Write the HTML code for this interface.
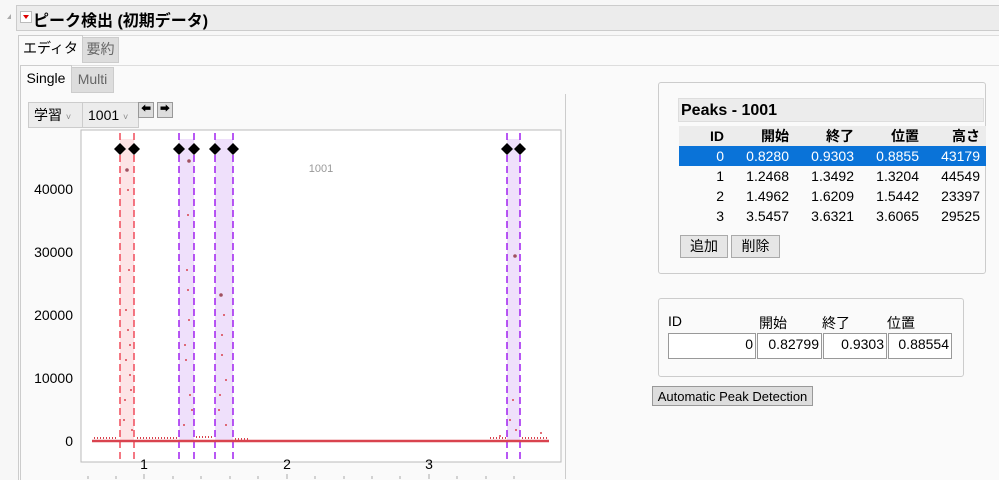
<!DOCTYPE html><html><head><meta charset="utf-8"><style>
body{margin:0;width:999px;height:479px;background:#f7f7f7;font-family:"Liberation Sans","Noto Sans CJK JP",sans-serif;position:relative;overflow:hidden}
.a{position:absolute}
.tbl td{font-size:14px;text-align:right;padding:0 6px 0 0;height:20px}
</style></head><body>
<div class="a" style="left:16px;top:5px;width:983px;height:24px;background:#ececec;border:1px solid #ccc;border-right:none"></div>
<div class="a" style="left:7px;top:14px;width:0;height:0;border-left:4px solid transparent;border-bottom:5px solid #aaa"></div>
<div class="a" style="left:20px;top:11px;width:10px;height:10px;background:#fff;border:1px solid #bbb"></div>
<div class="a" style="left:23px;top:15px;border-left:3px solid transparent;border-right:3px solid transparent;border-top:4px solid #d00"></div>
<div class="a" style="left:33px;top:7px;font-size:16px;font-weight:bold">ピーク検出 (初期データ)</div>
<div class="a" style="left:18px;top:35px;width:981px;height:444px;background:#fafafa;border-left:1px solid #ccc;border-top:1px solid #ddd"></div>
<div class="a" style="left:18px;top:35px;width:63px;height:27px;background:#fafafa;border:1px solid #ccc;border-bottom:none;font-size:14px;line-height:24px;text-align:center">エディタ</div>
<div class="a" style="left:82px;top:37px;width:35px;height:24px;background:#ddd;border:1px solid #ccc;font-size:14px;line-height:22px;text-align:center;color:#666">要約</div>
<div class="a" style="left:20px;top:65px;width:979px;height:414px;border-top:1px solid #ddd;border-left:1px solid #ccc"></div>
<div class="a" style="left:20px;top:65px;width:50px;height:25px;border:1px solid #ccc;border-bottom:none;background:#fafafa;font-size:14px;line-height:25px;text-align:center">Single</div>
<div class="a" style="left:71px;top:67px;width:41px;height:24px;background:#ddd;border:1px solid #ccc;font-size:14px;line-height:23px;text-align:center;color:#666">Multi</div>
<div class="a" style="left:18px;top:94px;width:546px;height:385px;border-left:1px solid #ccc;border-right:1px solid #ccc"></div>
<div class="a" style="left:28px;top:102px;width:49px;height:24px;background:#ececec;border:1px solid #ccc;font-size:14px;line-height:24px;padding-left:5px">学習 <span style="font-size:9px;color:#888">˅</span></div>
<div class="a" style="left:82px;top:102px;width:50px;height:24px;background:#ececec;border:1px solid #ccc;font-size:14px;line-height:24px;padding-left:5px">1001 <span style="font-size:9px;color:#888">˅</span></div>
<div class="a" style="left:138px;top:102px;width:14px;height:14px;background:#ddd;border:1px solid #999;font-size:10px;line-height:14px;text-align:center">⬅</div>
<div class="a" style="left:157px;top:102px;width:14px;height:14px;background:#ddd;border:1px solid #999;font-size:10px;line-height:14px;text-align:center">➡</div>
<svg class="a" style="left:0;top:0" width="999" height="479">
<rect x="81" y="130" width="480" height="332" fill="#fff" stroke="#bbb"/>
<g font-size="14" text-anchor="end" fill="#000">
<text x="73" y="194">40000</text><text x="73" y="257">30000</text><text x="73" y="320">20000</text><text x="73" y="383">10000</text><text x="73" y="446">0</text></g>
<g font-size="14" text-anchor="middle"><text x="144" y="469">1</text><text x="287" y="469">2</text><text x="429" y="469">3</text></g>
<g stroke="#aaa"><line x1="144" y1="474" x2="144" y2="479"/><line x1="287" y1="474" x2="287" y2="479"/><line x1="429" y1="474" x2="429" y2="479"/><line x1="88" y1="476" x2="88" y2="479"/><line x1="116" y1="476" x2="116" y2="479"/><line x1="173" y1="476" x2="173" y2="479"/><line x1="201" y1="476" x2="201" y2="479"/><line x1="230" y1="476" x2="230" y2="479"/><line x1="258" y1="476" x2="258" y2="479"/><line x1="315" y1="476" x2="315" y2="479"/><line x1="344" y1="476" x2="344" y2="479"/><line x1="372" y1="476" x2="372" y2="479"/><line x1="400" y1="476" x2="400" y2="479"/><line x1="457" y1="476" x2="457" y2="479"/><line x1="486" y1="476" x2="486" y2="479"/><line x1="514" y1="476" x2="514" y2="479"/></g>
<text x="321" y="172" font-size="11" fill="#999" text-anchor="middle">1001</text>
<rect x="120" y="139" width="14" height="302" fill="#fde4e6"/>
<rect x="179" y="139" width="15" height="302" fill="#efe0fb"/>
<rect x="215" y="139" width="18" height="302" fill="#efe0fb"/>
<rect x="507" y="139" width="13" height="302" fill="#efe0fb"/>
<g stroke-dasharray="7,4" stroke-width="1.5">
<line x1="120" y1="133" x2="120" y2="460" stroke="#f04b5a"/><line x1="134" y1="133" x2="134" y2="460" stroke="#f04b5a"/>
<line x1="179" y1="133" x2="179" y2="460" stroke="#a020f0"/><line x1="194" y1="133" x2="194" y2="460" stroke="#a020f0"/>
<line x1="215" y1="133" x2="215" y2="460" stroke="#a020f0"/><line x1="233" y1="133" x2="233" y2="460" stroke="#a020f0"/>
<line x1="507" y1="133" x2="507" y2="460" stroke="#a020f0"/><line x1="520" y1="133" x2="520" y2="460" stroke="#a020f0"/></g>
<line x1="92" y1="441" x2="549" y2="441" stroke="#d9434f" stroke-width="2.5"/>
<g stroke="#d9434f" stroke-width="2" stroke-dasharray="1,2">
<line x1="94" y1="438" x2="118" y2="438"/><line x1="137" y1="438" x2="178" y2="438"/><line x1="196" y1="437" x2="214" y2="437"/><line x1="235" y1="439" x2="250" y2="439"/><line x1="490" y1="438" x2="506" y2="438"/><line x1="522" y1="438" x2="549" y2="438"/></g>
<g fill="#d9434f">
<circle cx="127" cy="170" r="1.8" fill="#a05060"/><circle cx="128" cy="190" r="1"/><circle cx="129" cy="270" r="1"/><circle cx="126" cy="310" r="1"/><circle cx="128" cy="330" r="1"/><circle cx="130" cy="345" r="1"/><circle cx="126" cy="360" r="1"/><circle cx="131" cy="390" r="1"/><circle cx="124" cy="420" r="1"/><circle cx="132" cy="430" r="1"/><circle cx="125" cy="400" r="1"/><circle cx="130" cy="375" r="1"/>
<circle cx="189" cy="161" r="1.8" fill="#a05060"/><circle cx="188" cy="215" r="1"/><circle cx="187" cy="270" r="1"/><circle cx="189" cy="320" r="1"/><circle cx="186" cy="360" r="1"/><circle cx="190" cy="395" r="1"/><circle cx="192" cy="410" r="1"/><circle cx="184" cy="425" r="1"/><circle cx="188" cy="290" r="1"/><circle cx="185" cy="345" r="1"/>
<circle cx="221" cy="295" r="1.8" fill="#a05060"/><circle cx="224" cy="315" r="1"/><circle cx="222" cy="355" r="1"/><circle cx="226" cy="380" r="1"/><circle cx="219" cy="410" r="1"/><circle cx="226" cy="425" r="1"/><circle cx="222" cy="335" r="1"/><circle cx="220" cy="395" r="1"/>
<circle cx="515" cy="256" r="1.8" fill="#a05060"/><circle cx="513" cy="400" r="1"/><circle cx="510" cy="420" r="1"/><circle cx="516" cy="430" r="1"/><circle cx="541" cy="433" r="1"/><circle cx="500" cy="436" r="1"/></g>
<g fill="#000">
<path d="M120 143l6 6-6 6-6-6z"/><path d="M134 143l6 6-6 6-6-6z"/><path d="M179 143l6 6-6 6-6-6z"/><path d="M194 143l6 6-6 6-6-6z"/><path d="M215 143l6 6-6 6-6-6z"/><path d="M233 143l6 6-6 6-6-6z"/><path d="M507 143l6 6-6 6-6-6z"/><path d="M520 143l6 6-6 6-6-6z"/></g>
</svg>
<div class="a" style="left:658px;top:82px;width:326px;height:190px;border:1px solid #ccc;border-radius:3px;background:#fafafa"></div>
<div class="a" style="left:678px;top:98px;width:306px;height:24px;background:#ececec;border:1px solid #ddd;font-size:16px;font-weight:bold;line-height:24px;padding-left:2px;box-sizing:border-box">Peaks - 1001</div>
<table class="a tbl" style="left:679px;top:126px;border-collapse:collapse;width:307px">
<tr style="background:#ececec;font-weight:bold"><td style="width:45px">ID</td><td style="width:59px">開始</td><td style="width:59px">終了</td><td style="width:59px">位置</td><td>高さ</td></tr>
<tr style="background:#0a73d8;color:#fff"><td>0</td><td>0.8280</td><td>0.9303</td><td>0.8855</td><td>43179</td></tr>
<tr><td>1</td><td>1.2468</td><td>1.3492</td><td>1.3204</td><td>44549</td></tr>
<tr><td>2</td><td>1.4962</td><td>1.6209</td><td>1.5442</td><td>23397</td></tr>
<tr><td>3</td><td>3.5457</td><td>3.6321</td><td>3.6065</td><td>29525</td></tr></table>
<div class="a" style="left:680px;top:235px;width:46px;height:21px;background:#e6e6e6;border:1px solid #aaa;font-size:14px;line-height:21px;text-align:center">追加</div>
<div class="a" style="left:731px;top:235px;width:47px;height:21px;background:#e6e6e6;border:1px solid #aaa;font-size:14px;line-height:21px;text-align:center">削除</div>
<div class="a" style="left:658px;top:298px;width:304px;height:77px;border:1px solid #ccc;border-radius:3px;background:#fafafa"></div>
<div class="a" style="left:668px;top:313px;font-size:14px">ID</div>
<div class="a" style="left:759px;top:313px;font-size:14px">開始</div>
<div class="a" style="left:822px;top:313px;font-size:14px">終了</div>
<div class="a" style="left:887px;top:313px;font-size:14px">位置</div>
<div class="a" style="left:668px;top:333px;width:88px;height:26px;background:#fff;border:1px solid #999;font-size:14px;text-align:right;line-height:20px;box-sizing:border-box;padding-right:2px">0</div>
<div class="a" style="left:757px;top:333px;width:65px;height:26px;background:#fff;border:1px solid #999;font-size:14px;text-align:right;line-height:20px;box-sizing:border-box;padding-right:2px">0.82799</div>
<div class="a" style="left:823px;top:333px;width:64px;height:26px;background:#fff;border:1px solid #999;font-size:14px;text-align:right;line-height:20px;box-sizing:border-box;padding-right:2px">0.9303</div>
<div class="a" style="left:888px;top:333px;width:64px;height:26px;background:#fff;border:1px solid #999;font-size:14px;text-align:right;line-height:20px;box-sizing:border-box;padding-right:2px">0.88554</div>
<div class="a" style="left:652px;top:386px;width:161px;height:20px;background:#ddd;border:1px solid #999;font-size:13px;line-height:20px;text-align:center;box-sizing:border-box">Automatic Peak Detection</div>
</body></html>
